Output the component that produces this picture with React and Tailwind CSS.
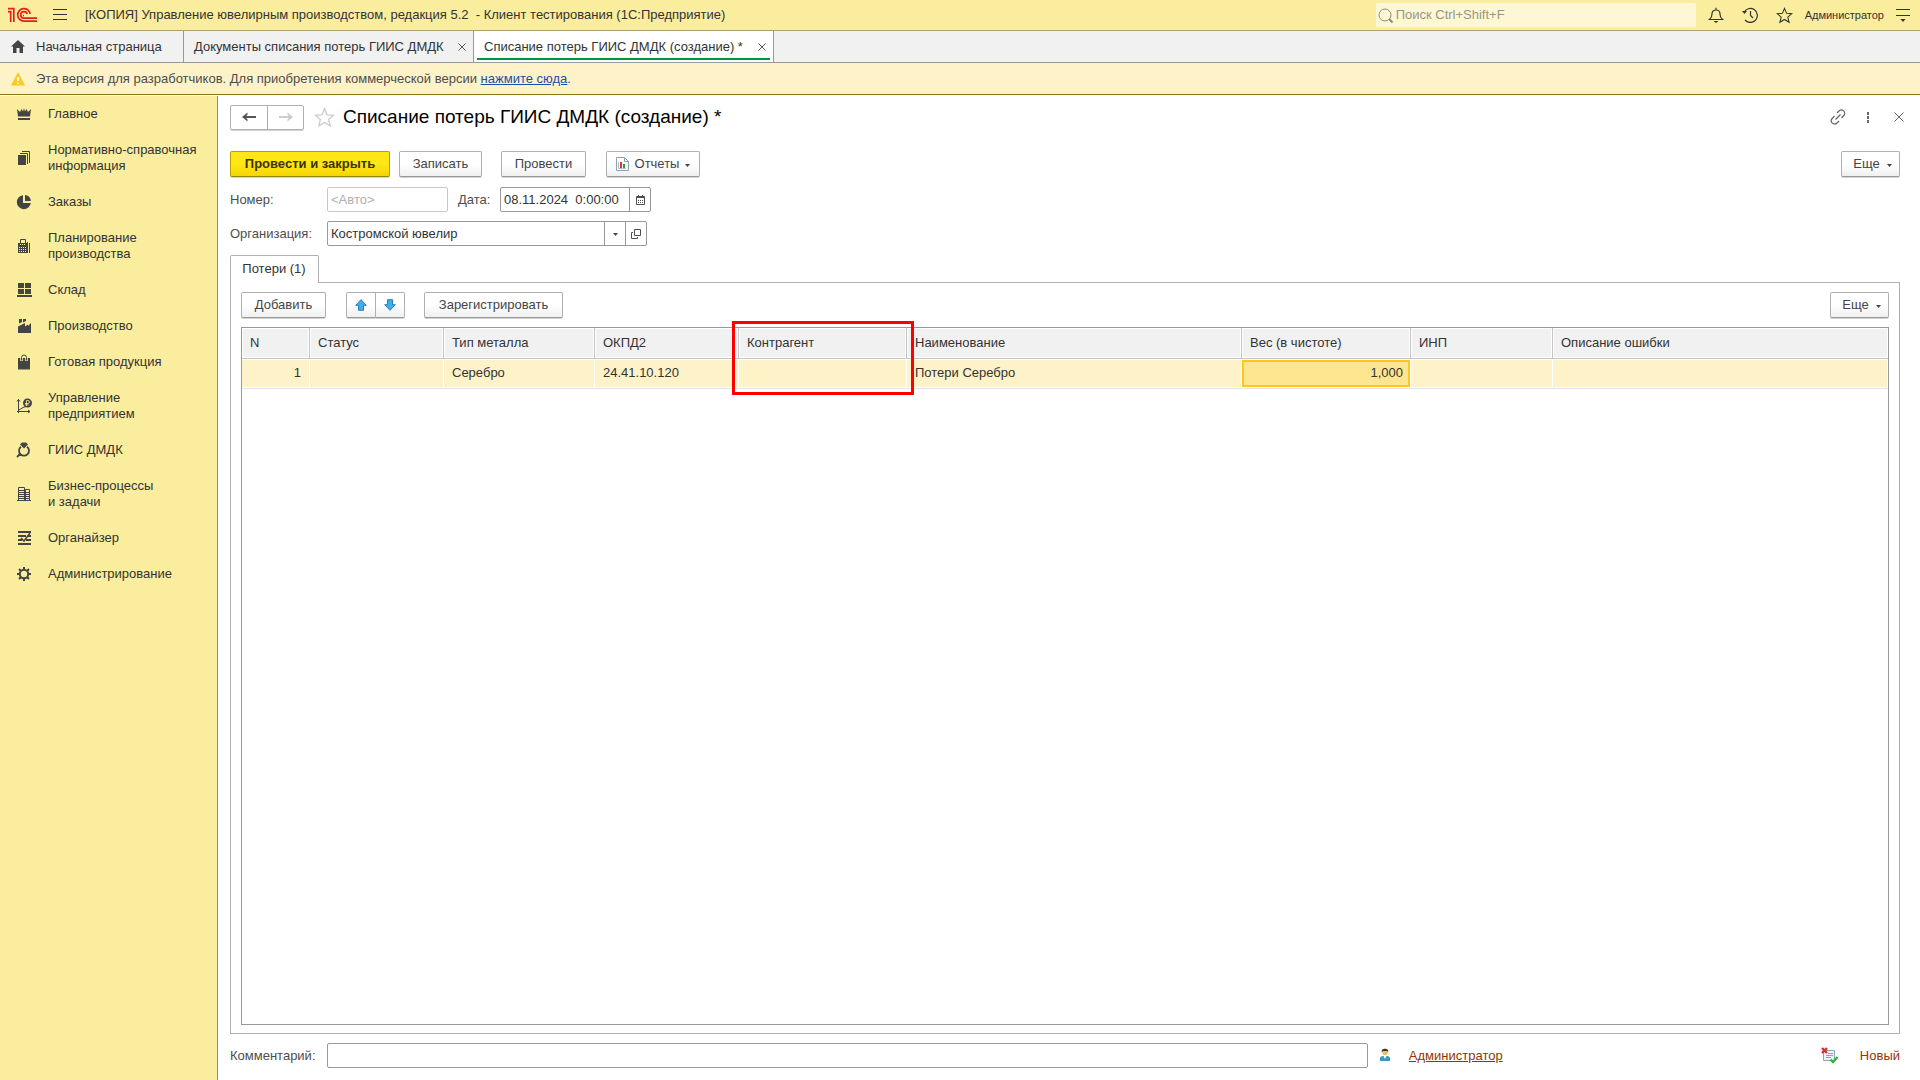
import clsx from "clsx";

const stroke = { fill: "none", stroke: "currentColor" };

const Logo = () => (
  <svg width="30" height="16" viewBox="0 0 30 16" fill="none" stroke="#e0201b" strokeWidth="1.7">
    <path d="M0 4.600h2.700V15M0 1.600h5.800V15" />
    <path d="M29 14.200H16a6.300 6.300 0 1 1 6.200-7.400" />
    <path d="M29 11.200H16a3.300 3.300 0 1 1 3.200-4.200" />
    <path d="M16 8.500h-1" />
  </svg>
);

const CrownIcon = () => (
  <svg width="16" height="16" viewBox="0 0 16 16" fill="currentColor">
    <path d="M1 3l3 3 1.500-3L7 5.500 8 2l1 3.500L10.500 3 12 6l3-3-1 7.500H2zM2 12h12v2H2z" />
  </svg>
);

const PagesIcon = () => (
  <svg width="16" height="16" viewBox="0 0 16 16" fill="currentColor">
    <path d="M2 5h8v10H2z" />
    <path d="M4 3.500h7.500V14M6 1.500h7.500V13" {...stroke} />
  </svg>
);

const PieIcon = () => (
  <svg width="16" height="16" viewBox="0 0 16 16" fill="currentColor">
    <path d="M7 1.200V9h7.800A7 7 0 1 1 7 1.200z" />
    <path d="M9 1a6 6 0 0 1 5.800 6H9z" />
  </svg>
);

const PlanIcon = () => (
  <svg width="16" height="16" viewBox="0 0 16 16" fill="currentColor">
    <path d="M4.500 6V1.500h5V6M11.500 4v11M13.500 5v10" {...stroke} />
    <path d="M2 5h9v10H2z" />
    <path d="M4 6.500h5M3 9.500h7M3 11.500h7M3 13.500h7" stroke="#fbed9e" strokeDasharray="1 1" />
  </svg>
);

const StoreIcon = () => (
  <svg width="16" height="16" viewBox="0 0 16 16" fill="currentColor">
    <path d="M2 1h6v5H2zM9 1h6v5H9zM2 7h6v5H2zM9 7h6v5H9zM1 13h15v2H1z" />
  </svg>
);

const FactoryIcon = () => (
  <svg width="16" height="16" viewBox="0 0 16 16" fill="currentColor">
    <path d="M3 1h3v3L3 5.500zM7 1h3v2L7 4.500zM2 8.500l7-3.500v3.500l3-2V8l3-3v10H2z" />
  </svg>
);

const BagIcon = () => (
  <svg width="16" height="16" viewBox="0 0 16 16" fill="currentColor">
    <path d="M2 4h12v11.500H2z" />
    <path d="M5.500 7V3.500a2.500 2.500 0 0 1 5 0V7" stroke="#fbed9e" strokeWidth="2.600" fill="none" />
    <path d="M5.500 6.500V3.500a2.500 2.500 0 0 1 5 0v3" {...stroke} />
  </svg>
);

const ChartIcon = () => (
  <svg width="16" height="16" viewBox="0 0 16 16" {...stroke}>
    <path d="M2.500 15V1M1 3.500l1.500-2L4 3.500M1 13.500h13M12 12l2 1.500-2 1.500M3 12l4-2.500 3-1" />
    <circle cx="11.500" cy="5" r="4.500" fill="currentColor" stroke="none" />
    <path d="M10.500 8V2.500H12a1.400 1.400 0 0 1 0 3H9M9 6.800h3.500" stroke="#fbed9e" strokeWidth=".8" />
  </svg>
);

const RingIcon = () => (
  <svg width="16" height="16" viewBox="0 0 16 16" {...stroke} strokeWidth="1.800">
    <path d="M5 4.700a5 5 0 1 0 6 0M4.500 11.500 1 15" />
    <path d="M6 .5h4l2 2L8 6.500 4 2.500z" fill="currentColor" stroke="none" />
  </svg>
);

const BuildingIcon = () => (
  <svg width="16" height="16" viewBox="0 0 16 16" {...stroke}>
    <path d="M2.500 15V1.500h6V15M9.500 15V3.500h4V15M1 14.500h14M3 4.500h5M3 6.500h5M3 8.500h5M3 10.500h5M3 12.500h5M10 6.500h4M10 8.500h4M10 10.500h4M10 12.500h4" />
  </svg>
);

const OrganizerIcon = () => (
  <svg width="16" height="16" viewBox="0 0 16 16" {...stroke} strokeWidth="2">
    <path d="M2 2h13M2 6h8M12 6h3M2 10h4M10 10h5M2 14h13" />
    <path d="M5 8l3 3 6-8" strokeWidth="1.500" />
  </svg>
);

const GearIcon = () => (
  <svg width="16" height="16" viewBox="0 0 16 16" {...stroke} strokeWidth="2">
    <circle cx="8" cy="8" r="4.200" />
    <path d="M8 1v3M8 12v3M1 8h3M12 8h3M3 3l2 2M11 11l2 2M13 3l-2 2M5 11l-2 2" />
  </svg>
);

const HomeIcon = () => (
  <svg width="14" height="13" viewBox="0 0 14 13" fill="#444">
    <path d="M7 0l7 6.500h-2V13H8.500V8h-3v5H2V6.500H0z" />
  </svg>
);

const CloseIcon = ({ size = 8 }) => (
  <svg width={size} height={size} viewBox="0 0 10 10" {...stroke}>
    <path d="M.5.5l9 9M9.500.5l-9 9" />
  </svg>
);

const StarIcon = ({ size }) => (
  <svg width={size} height={size} viewBox="0 0 18 18" {...stroke} strokeWidth="1.100">
    <path d="M9 1.500l2.200 5.200 5.500.4-4.200 3.600 1.400 5.500L9 13.200l-4.900 3 1.400-5.500L1.300 7.100l5.500-.4z" />
  </svg>
);

const Caret = () => (
  <svg width="5" height="5" viewBox="0 0 5 5" fill="#444">
    <path d="M0 2h5L2.500 5z" />
  </svg>
);

const NavArrow = ({ flip }) => (
  <svg width="14" height="10" viewBox="0 0 14 10" className={clsx(flip && "rotate-180")}>
    <path d="M14 5H3" {...stroke} strokeWidth="2" />
    <path d="M5.500.5v2L3.500 5l2 2.500v2L0 5z" fill="currentColor" />
  </svg>
);

const MoveArrow = ({ flip }) => (
  <svg width="12" height="12" viewBox="0 0 12 12" className={clsx(flip && "rotate-180")}>
    <path d="M6 .7l5.300 5.600H8.500v5h-5v-5H.7z" fill="#41aeea" stroke="#2a7db3" />
  </svg>
);

const menuItems = [
  { name: "Главное", icon: CrownIcon },
  { name: "Нормативно-справочная информация", icon: PagesIcon },
  { name: "Заказы", icon: PieIcon },
  { name: "Планирование производства", icon: PlanIcon },
  { name: "Склад", icon: StoreIcon },
  { name: "Производство", icon: FactoryIcon },
  { name: "Готовая продукция", icon: BagIcon },
  { name: "Управление предприятием", icon: ChartIcon },
  { name: "ГИИС ДМДК", icon: RingIcon },
  { name: "Бизнес-процессы и\u00a0задачи", icon: BuildingIcon },
  { name: "Органайзер", icon: OrganizerIcon },
  { name: "Администрирование", icon: GearIcon },
];

const columns = [
  { name: "N", value: "1", width: "w-[68px]", right: true },
  { name: "Статус", value: "", width: "w-[134px]" },
  { name: "Тип металла", value: "Серебро", width: "w-[151px]" },
  { name: "ОКПД2", value: "24.41.10.120", width: "w-[144px]" },
  { name: "Контрагент", value: "", width: "w-[168px]", marked: true },
  { name: "Наименование", value: "Потери Серебро", width: "w-[335px]" },
  { name: "Вес (в чистоте)", value: "1,000", width: "w-[169px]", right: true, active: true },
  { name: "ИНП", value: "", width: "w-[142px]" },
  { name: "Описание ошибки", value: "", width: "" },
];

const Button = ({ className, children, ...rest }) => (
  <button
    className={clsx(
      "h-[26px] flex items-center justify-center rounded-xs border border-[#b0b0b0] border-b-[#989898] bg-gradient-to-b from-white from-50% to-[#f0f0f0] text-[#444] shadow-[0_1px_0_#d4d4d4] whitespace-nowrap",
      className
    )}
    {...rest}
  >
    {children}
  </button>
);

const TopBar = () => (
  <header className="h-[31px] flex items-center bg-[#fbed9e] border-b border-[#aaa170] pl-2 pr-[10px]">
    <Logo />
    <button aria-label="Меню" className="ml-[15px]">
      <svg width="14" height="12" viewBox="0 0 14 12" {...stroke}>
        <path d="M0 .5h14M0 5.500h14M0 10.500h14" />
      </svg>
    </button>
    <h1 className="ml-[18px] whitespace-pre">
      [КОПИЯ] Управление ювелирным производством, редакция 5.2  - Клиент тестирования (1С:Предприятие)
    </h1>
    <label className="ml-auto w-80 h-6 flex items-center gap-[3px] rounded-xs bg-[#fef7d5] pl-[2px] text-[#8f8c78]">
      <svg width="15" height="15" viewBox="0 0 15 15" {...stroke}>
        <circle cx="7" cy="7" r="6" />
        <path d="M11 11l3.500 3.500" strokeWidth="2" />
      </svg>
      <input
        type="search"
        aria-label="Поиск"
        placeholder="Поиск Ctrl+Shift+F"
        className="flex-1 min-w-0 bg-transparent outline-none placeholder:text-[#999683]"
      />
    </label>
    <button aria-label="Уведомления" className="ml-3">
      <svg width="16" height="16" viewBox="0 0 16 16" {...stroke} strokeWidth="1.200">
        <path d="M1.500 12.500c2-1.500 2.500-3 2.500-5.500C4 4.500 5.500 3 8 3s4 1.500 4 4c0 2.500.5 4 2.500 5.500zM8 3V.8" />
        <path d="M5.500 14h5L8 16z" fill="currentColor" stroke="none" />
      </svg>
    </button>
    <button aria-label="История" className="ml-[18px]">
      <svg width="16" height="16" viewBox="0 0 16 16" {...stroke} strokeWidth="1.200">
        <path d="M2 5.500A7 7 0 1 1 3 13M8.500 4v4.500l2.500 2.500" />
        <path d="M0 4h5L2.500 7z" fill="currentColor" stroke="none" />
      </svg>
    </button>
    <button aria-label="Избранное" className="ml-[18px]">
      <StarIcon size={17} />
    </button>
    <button className="ml-3 text-[11px]">Администратор</button>
    <button aria-label="Настройка" className="ml-3">
      <svg width="14" height="14" viewBox="0 0 14 14" {...stroke}>
        <path d="M0 1.500h14M0 7.500h14" />
        <path d="M4.500 11h5L7 14z" fill="currentColor" stroke="none" />
      </svg>
    </button>
  </header>
);

const TabsBar = () => (
  <nav className="h-8 flex bg-[#f1f1f1] border-b border-[#999]">
    <button className="w-46 flex items-center pl-[11px] gap-[11px] border-r border-[#999]">
      <HomeIcon />
      Начальная страница
    </button>
    <div className="w-[290px] flex items-center justify-between pl-[10px] pr-[7px] border-r border-[#999]">
      <button>Документы списания потерь ГИИС ДМДК</button>
      <button aria-label="Закрыть вкладку">
        <CloseIcon />
      </button>
    </div>
    <div className="relative w-[300px] flex items-center justify-between pl-[10px] pr-[7px] border-r border-[#999] bg-white">
      <button>Списание потерь ГИИС ДМДК (создание) *</button>
      <button aria-label="Закрыть вкладку">
        <CloseIcon />
      </button>
      <span className="absolute left-[3px] right-[3px] bottom-[2px] h-[2px] bg-[#009646]" />
    </div>
  </nav>
);

const Banner = () => (
  <div className="h-8 flex items-center bg-[#fef2c8] border-b border-[#8f7713] pl-[11px] text-[#4d4d4d]">
    <svg width="14" height="14" viewBox="0 0 14 14" className="mr-[11px]">
      <path d="M7 0l7 13.500H0z" fill="#fbc91f" />
      <path d="M7 5v4M7 10.500v1.500" stroke="#fff" strokeWidth="1.800" />
    </svg>
    <p>
      Эта версия для разработчиков. Для приобретения коммерческой версии{" "}
      <a href="#buy" className="text-[#1a4fae] underline">нажмите сюда</a>.
    </p>
  </div>
);

const Sidebar = () => (
  <aside className="w-[218px] shrink-0 bg-[#fbed9e] border-r border-[#999060]">
    <nav>
      {menuItems.map((item) => {
        const Icon = item.icon;
        return (
          <a
            key={item.name}
            href="#section"
            className="flex items-center pl-4 pr-3 py-[10px] leading-4 text-[#333]"
          >
            <span className="w-8 shrink-0 text-[#444]">
              <Icon />
            </span>
            <span>{item.name}</span>
          </a>
        );
      })}
    </nav>
  </aside>
);

const FormHeader = () => (
  <div className="h-[26px] flex items-center">
    <div className="flex h-[25px] rounded-xs border border-[#b0b0b0] shadow-[0_1px_0_#d4d4d4]">
      <button aria-label="Назад" className="w-[37px] flex items-center justify-center border-r border-[#b0b0b0] text-[#555]">
        <NavArrow />
      </button>
      <button aria-label="Вперед" className="w-[35px] flex items-center justify-center text-[#ccc]">
        <NavArrow flip />
      </button>
    </div>
    <button aria-label="В избранное" className="ml-[10px] text-[#ccc]">
      <StarIcon size={21} />
    </button>
    <h2 className="ml-2 text-[19px] leading-6 text-black">Списание потерь ГИИС ДМДК (создание) *</h2>
    <div className="ml-auto -mr-1 flex items-center text-[#666]">
      <button aria-label="Ссылка">
        <svg width="16" height="16" viewBox="0 0 16 16" {...stroke} strokeWidth="1.200">
          <path d="M7 4l2-2a3.200 3.200 0 0 1 4.800 4.500L11.500 9M9 12l-2 2a3.200 3.200 0 0 1-4.800-4.500L4.500 7M5.500 10.500l5-5" />
        </svg>
      </button>
      <button aria-label="Еще действия" className="ml-[21px]">
        <svg width="3" height="11" viewBox="0 0 3 11" fill="currentColor">
          <path d="M0 0h2v3H0zM0 4h2v3H0zM0 8h2v3H0z" />
        </svg>
      </button>
      <button aria-label="Закрыть" className="ml-6">
        <CloseIcon size={10} />
      </button>
    </div>
  </div>
);

const CommandBar = () => (
  <div className="mt-[21px] flex">
    <Button className="w-40 border-[#b5a000]! border-b-[#988600]! from-[#ffe616]! to-[#f5d600]! text-[#3b3300]! font-bold">
      Провести и закрыть
    </Button>
    <Button className="ml-[9px] w-[83px]">Записать</Button>
    <Button className="ml-[19px] w-[85px]">Провести</Button>
    <Button className="ml-5 w-[94px] gap-[6px]">
      <svg width="13" height="14" viewBox="0 0 13 14">
        <path d="M.5.5h8l4 4v9H.5z" fill="#fff" stroke="#8ca3b3" />
        <path d="M8.500.5v4h4" fill="none" stroke="#8ca3b3" />
        <path d="M4 5h2v6H4z" fill="#e8322b" />
        <path d="M7 7h2v4H7z" fill="#2e9c33" />
        <path d="M2.500 5v6.500H10" fill="none" stroke="#b5c3cd" />
      </svg>
      Отчеты
      <Caret />
    </Button>
    <Button className="ml-auto w-[59px] gap-[7px] pl-1">
      Еще
      <Caret />
    </Button>
  </div>
);

const Fields = () => (
  <div className="mt-[10px] flex flex-col gap-[9px]">
    <div className="flex items-center">
      <label htmlFor="number" className="w-[97px]">Номер:</label>
      <input
        id="number"
        placeholder="<Авто>"
        className="w-[121px] h-[25px] rounded-xs border border-[#c8c8c8] px-[3px] placeholder:text-[#b0b0b0]"
      />
      <label htmlFor="date" className="ml-[10px] w-[42px]">Дата:</label>
      <div className="flex h-[25px] rounded-xs border border-[#999]">
        <input id="date" defaultValue="08.11.2024  0:00:00" className="w-32 px-[3px] text-[#333]" />
        <button aria-label="Выбрать дату" className="w-[21px] flex items-center justify-center border-l border-[#999]">
          <svg width="9" height="10" viewBox="0 0 9 10" {...stroke}>
            <path d="M.5 1.500h8v8h-8zM0 2.500h9M2.500 0v2M6.500 0v2" />
            <path d="M2 5.500h5M2 7.500h5" strokeDasharray="1 1" />
          </svg>
        </button>
      </div>
    </div>
    <div className="flex items-center">
      <label htmlFor="org" className="w-[97px]">Организация:</label>
      <div className="flex h-[25px] rounded-xs border border-[#999]">
        <input id="org" defaultValue="Костромской ювелир" className="w-[276px] px-[3px] text-[#333]" />
        <button aria-label="Выбрать" className="w-[21px] flex items-center justify-center border-l border-[#999]">
          <Caret />
        </button>
        <button aria-label="Открыть" className="w-[21px] flex items-center justify-center border-l border-[#999]">
          <svg width="10" height="10" viewBox="0 0 10 10" {...stroke}>
            <path d="M3.500.5h6v6h-6zM2 3.500H.5v6h6V8" />
          </svg>
        </button>
      </div>
    </div>
  </div>
);

const LossTable = () => (
  <div className="mt-[9px] flex-1 border border-[#999]">
    <table className="w-full table-fixed border-separate border-spacing-0 text-[#333]">
      <thead>
        <tr>
          {columns.map((col) => (
            <th
              key={col.name}
              className={clsx(
                "relative p-0 border-r border-b border-[#c4c4c4] last:border-r-0 font-normal text-left",
                col.width
              )}
            >
              <div className="h-[30px] border border-white bg-[#f1f1f1] pl-[7px] leading-7">{col.name}</div>
              {col.marked && (
                <span className="absolute z-10 -top-[7px] -left-[7px] -right-2 h-[74px] border-3 border-[#f00] pointer-events-none" />
              )}
            </th>
          ))}
        </tr>
      </thead>
      <tbody>
        <tr>
          {columns.map((col) => (
            <td key={col.name} className="p-0 border-b border-[#e2e2e2]">
              <div
                className={clsx(
                  "h-[29px] border-y border-r border-white leading-[26px]",
                  col.active ? "" : "px-2 bg-[#fef2c8]",
                  col.right && "text-right"
                )}
              >
                {col.active ? (
                  <div className="h-[27px] border-2 border-[#fac81e] bg-[#fee58f] pr-[5px] leading-[22px]">
                    {col.value}
                  </div>
                ) : (
                  col.value
                )}
              </div>
            </td>
          ))}
        </tr>
      </tbody>
    </table>
  </div>
);

const LossPanel = () => (
  <section className="mt-[9px] flex-1 flex flex-col">
    <div className="flex">
      <button className="relative z-10 -mb-px h-7 w-[89px] rounded-t-xs border border-b-0 border-[#b0b0b0] bg-white pb-[2px] pr-px text-[#333]">
        Потери (1)
      </button>
    </div>
    <div className="flex-1 flex flex-col border border-[#b0b0b0] px-[10px] pt-[9px] pb-2">
      <div className="flex">
        <Button className="w-[85px]">Добавить</Button>
        <Button aria-label="Вверх" className="ml-5 w-[30px] rounded-r-none">
          <MoveArrow />
        </Button>
        <Button aria-label="Вниз" className="-ml-px w-[30px] rounded-l-none">
          <MoveArrow flip />
        </Button>
        <Button className="ml-[19px] w-[139px]">Зарегистрировать</Button>
        <Button className="ml-auto w-[59px] gap-[7px] pl-1">
          Еще
          <Caret />
        </Button>
      </div>
      <LossTable />
    </div>
  </section>
);

const Footer = () => (
  <footer className="mt-[9px] flex items-center">
    <label htmlFor="comment" className="w-[97px]">Комментарий:</label>
    <input id="comment" className="flex-1 min-w-0 h-[25px] rounded-xs border border-[#999] px-[3px]" />
    <svg width="10" height="16" viewBox="0 0 10 16" className="ml-3">
      <path d="M0 13V10.500Q0 8 3 8h4q3 0 3 2.500V13z" fill="#3d96c8" />
      <path d="M3.500 8L5 11l1.500-3z" fill="#fff" />
      <circle cx="5" cy="4.500" r="2.800" fill="#f0bd6c" />
      <path d="M1.800 4.500C1.300 1.500 3 .8 5 .8s3.700.7 3.200 3.700L7.200 3H2.800z" fill="#3d3528" />
    </svg>
    <a href="#user" className="ml-[19px] w-[412px] text-[#993300] underline">Администратор</a>
    <svg width="17" height="18" viewBox="0 0 17 18">
      <path d="M2.500 3.500h11v10h-11z" fill="#eef3f7" stroke="#8ca3b3" />
      <path d="M7 6.500h5M5 8.500h7M5 10.500h5" stroke="#8ca3b3" />
      <path d="M1 1l5 5M6 1L1 6" stroke="#dd2c2c" strokeWidth="2.400" />
      <path d="M9.500 12.500l2.500 2.500 4.500-5" fill="none" stroke="#2db23a" strokeWidth="2.400" />
    </svg>
    <a href="#state" className="ml-[22px] text-[#993300]">Новый</a>
  </footer>
);

export default function App() {
  return (
    <div className="min-h-screen flex flex-col bg-white font-['Liberation_Sans',Arial,sans-serif] text-[13px] text-[#333]">
      <TopBar />
      <TabsBar />
      <Banner />
      <div className="flex-1 flex pt-px">
        <Sidebar />
        <main className="flex-1 min-w-0 flex flex-col pl-3 pr-5 pt-2 pb-3 text-[#4d4d4d]">
          <FormHeader />
          <CommandBar />
          <Fields />
          <LossPanel />
          <Footer />
        </main>
      </div>
    </div>
  );
}
